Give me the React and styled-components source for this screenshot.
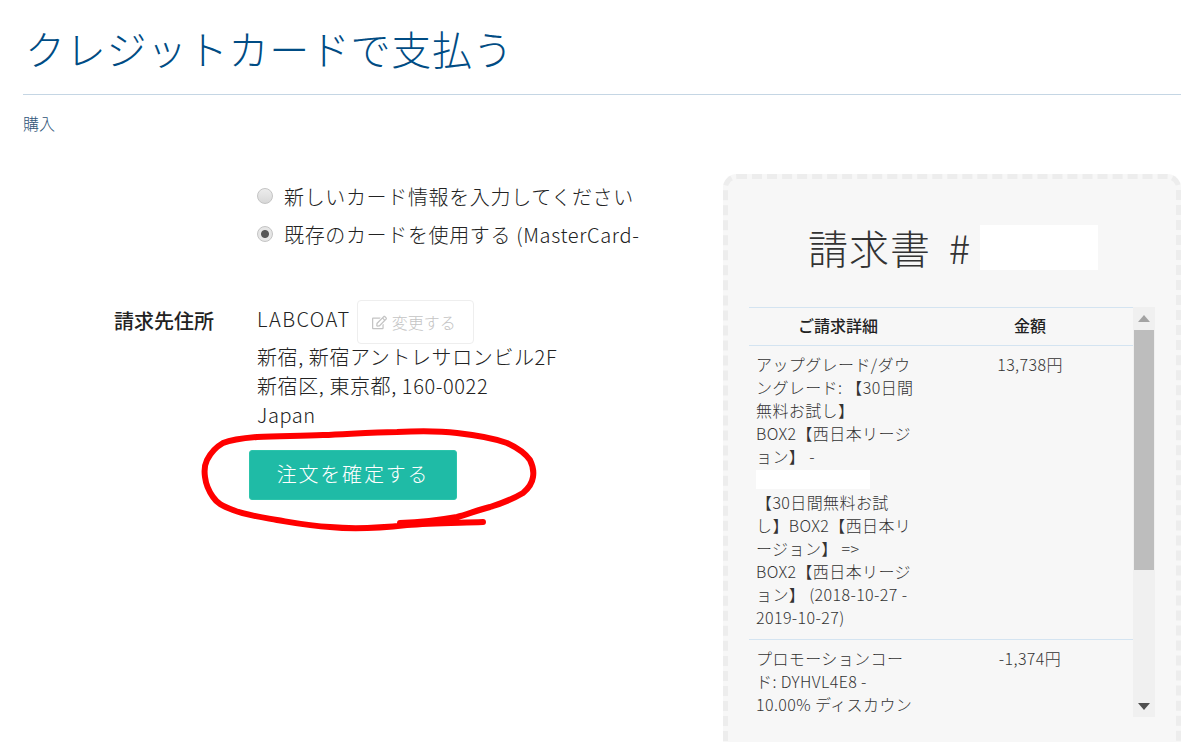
import React from 'react'
import styled, { createGlobalStyle } from 'styled-components'
import { FaRegEdit } from 'react-icons/fa'

const GlobalStyle = createGlobalStyle`
  html, body {
    margin: 0;
    height: 742px;
    overflow: hidden;
    background: #fff;
    font-family: "Noto Sans CJK JP", "Noto Sans", sans-serif;
    font-weight: 300;
    color: #222;
  }
`

const Page = styled.div`
  position: relative;
  height: 742px;
  padding: 0 19px 0 23px;
  overflow: hidden;
`

const Title = styled.h1`
  margin: 0;
  padding: 16px 0 14px 2px;
  height: 64px;
  font-size: 40px;
  line-height: 64px;
  font-weight: 300;
  letter-spacing: 0.7px;
  color: #004c84;
  border-bottom: 1px solid #c5d6e4;
`

const Crumb = styled.div`
  margin-top: 17px;
  font-size: 16px;
  line-height: 23px;
  color: #2f5578;
`

const Columns = styled.div`
  display: grid;
  grid-template-columns: 700px 458px;
  margin-top: 39px;
`

const FormCol = styled.div`
  padding: 3px 0 0 234px;
`

const RadioRow = styled.div`
  display: flex;
  align-items: center;
  gap: 11px;
  height: 38px;
  font-size: 20px;
  letter-spacing: 0.65px;
  white-space: nowrap;
`

const Radio = styled.span`
  width: 16px;
  height: 16px;
  border-radius: 50%;
  box-sizing: border-box;
  border: 1px solid #c4c4c4;
  background: ${p => p.checked
    ? 'radial-gradient(circle, #555 0 3.5px, #e6e6e6 4.5px)'
    : 'linear-gradient(#ececec, #d8d8d8)'};
`

const BillingRow = styled.div`
  display: flex;
  margin: 47px 0 0 -143px;
`

const BillingLabel = styled.div`
  width: 143px;
  padding-top: 8px;
  font-size: 20px;
  line-height: 26px;
  font-weight: 500;
  white-space: nowrap;
`

const Address = styled.div`
  font-size: 20px;
  line-height: 29px;
  letter-spacing: 0.6px;
  white-space: nowrap;
`

const NameLine = styled.div`
  display: flex;
  align-items: flex-start;
  gap: 6px;
  height: 42px;
  line-height: 38px;
`

const Name = styled.span`
  letter-spacing: 1.4px;
`

const ChangeButton = styled.span`
  display: inline-flex;
  align-items: center;
  gap: 5px;
  box-sizing: border-box;
  width: 117px;
  height: 44px;
  padding-left: 14px;
  border: 1px solid #eee;
  border-radius: 4px;
  font-size: 16px;
  letter-spacing: 0;
  color: #c4c4c4;
`

const Submit = styled.div`
  display: flex;
  align-items: center;
  justify-content: center;
  box-sizing: border-box;
  width: 208px;
  height: 50px;
  padding-bottom: 3px;
  margin: 21px 0 0 -8px;
  border-radius: 3px;
  border: 1px solid #2cc4ab;
  background: #1fbba6;
  color: #fff;
  font-size: 20px;
  letter-spacing: 1.8px;
`

const InvoiceCard = styled.div`
  box-sizing: border-box;
  height: 620px;
  padding: 0 21px;
  background: #f7f7f7;
  border: 5px dashed #ededed;
  border-radius: 14px;
`

const InvoiceTitle = styled.div`
  display: flex;
  align-items: center;
  height: 80px;
  margin: 28px 0 20px 59px;
  font-size: 40px;
  font-weight: 300;
  letter-spacing: 1px;
  word-spacing: 8px;
  color: #333;
  gap: 9px;
  white-space: nowrap;
`

const Blank = styled.span`
  display: block;
  width: ${p => p.w}px;
  height: ${p => p.h}px;
  background: #fff;
`

const TableWrap = styled.div`
  display: flex;
  height: 410px;
`

const Table = styled.div`
  width: 384px;
  overflow: hidden;
  border-top: 1px solid #d4e4f1;
`

const Head = styled.div`
  display: grid;
  grid-template-columns: 178px 206px;
  box-sizing: border-box;
  height: 38px;
  padding-bottom: 3px;
  align-items: center;
  text-align: center;
  font-size: 16px;
  font-weight: 500;
  border-bottom: 1px solid #d4e4f1;
`

const Row = styled.div`
  display: grid;
  grid-template-columns: 178px 206px;
  padding: 7px 0 10px;
  border-bottom: 1px solid #d4e4f1;
  font-size: 16px;
  line-height: 23px;
  letter-spacing: 0.4px;
  color: #333;
`

const Detail = styled.div`
  padding-left: 7px;
  white-space: nowrap;
`

const Amount = styled.div`
  text-align: center;
`

const RedactedLine = styled.span`
  display: block;
  width: 114px;
  height: 19px;
  margin: 2px 0;
  background: #fff;
`

const Scrollbar = styled.div`
  display: flex;
  flex-direction: column;
  align-items: center;
  width: 22px;
  background: #f0f0f0;
`

const ArrowBox = styled.div`
  display: flex;
  align-items: center;
  justify-content: center;
  flex: 0 0 ${p => p.h}px;
  width: 100%;
`

const Thumb = styled.div`
  width: 20px;
  height: 240px;
  background: #bdbdbd;
`

const Spacer = styled.div`
  flex: 1;
`

const Scribble = styled.svg`
  position: absolute;
  left: 0;
  top: 0;
  pointer-events: none;
`

export default function App() {
  return (
    <Page>
      <GlobalStyle />
      <Title>クレジットカードで支払う</Title>
      <Crumb>購入</Crumb>
      <Columns>
        <FormCol>
          <RadioRow><Radio />新しいカード情報を入力してください</RadioRow>
          <RadioRow><Radio checked />既存のカードを使用する (MasterCard-</RadioRow>
          <BillingRow>
            <BillingLabel>請求先住所</BillingLabel>
            <Address>
              <NameLine>
                <Name>LABCOAT</Name>
                <ChangeButton><FaRegEdit size={15} />変更する</ChangeButton>
              </NameLine>
              新宿, 新宿アントレサロンビル2F<br />
              新宿区, 東京都, 160-0022<br />
              Japan
              <Submit>注文を確定する</Submit>
            </Address>
          </BillingRow>
        </FormCol>
        <InvoiceCard>
          <InvoiceTitle>請求書 #<Blank w={118} h={45} /></InvoiceTitle>
          <TableWrap>
            <Table>
              <Head><span>ご請求詳細</span><span>金額</span></Head>
              <Row>
                <Detail>
                  アップグレード/ダウ<br />
                  ングレード: 【30日間<br />
                  無料お試し】<br />
                  BOX2【西日本リージ<br />
                  ョン】 -<br />
                  <RedactedLine />
                  【30日間無料お試<br />
                  し】BOX2【西日本リ<br />
                  ージョン】 =&gt;<br />
                  BOX2【西日本リージ<br />
                  ョン】 (2018-10-27 -<br />
                  2019-10-27)
                </Detail>
                <Amount>13,738円</Amount>
              </Row>
              <Row>
                <Detail>
                  プロモーションコー<br />
                  ド: DYHVL4E8 -<br />
                  10.00% ディスカウン
                </Detail>
                <Amount>-1,374円</Amount>
              </Row>
            </Table>
            <Scrollbar>
              <ArrowBox h={23}>
                <svg width="12" height="7" viewBox="0 0 12 7"><path d="M6 0 L12 7 L0 7 Z" fill="#a3a3a3" /></svg>
              </ArrowBox>
              <Thumb />
              <Spacer />
              <ArrowBox h={22}>
                <svg width="12" height="7" viewBox="0 0 12 7"><path d="M0 0 L12 0 L6 7 Z" fill="#505050" /></svg>
              </ArrowBox>
            </Scrollbar>
          </TableWrap>
        </InvoiceCard>
      </Columns>
      <Scribble width="1200" height="742">
        <path
          d="M483 522 C450 523 430 523 407 525 C380 528 350 529 330 527 C310 526 295 523 277 520 C260 517 245 515 233 510 C222 506 217 503 213 497 C208 490 206 485 205 477 C204 470 204 466 207 460 C211 452 216 447 223 443 C233 439 245 438 257 437 C280 436 300 436 323 435 C350 434 372 432 397 432 C420 431 440 431 457 433 C475 435 493 438 507 443 C518 448 525 453 530 460 C533 466 534 471 533 477 C532 484 529 488 523 493 C513 499 503 503 490 507 C478 510 468 514 457 517 C440 520 425 522 400 523"
          fill="none"
          stroke="#f00"
          strokeWidth="6"
          strokeLinecap="round"
        />
      </Scribble>
    </Page>
  )
}
